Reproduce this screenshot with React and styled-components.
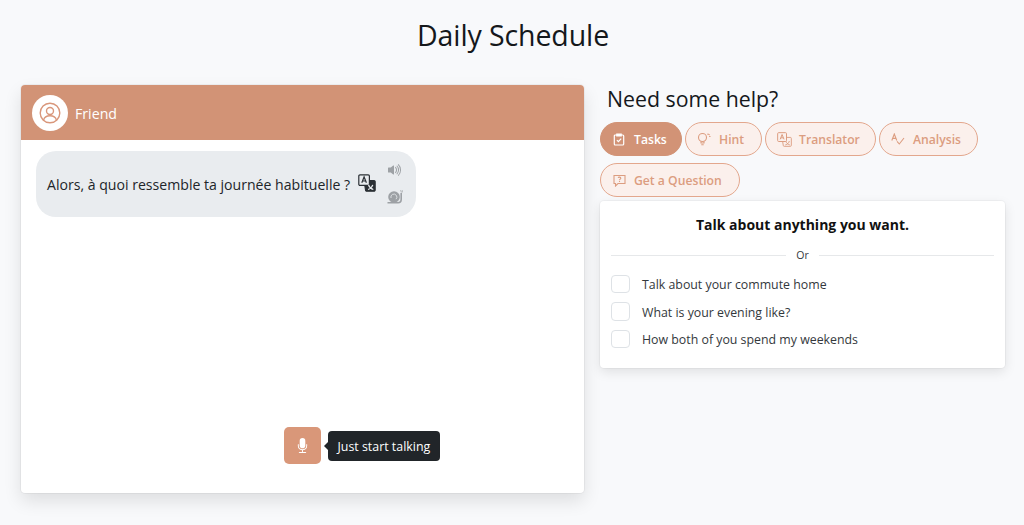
import React from "react";
import styled, { createGlobalStyle } from "styled-components";
import { BsVolumeUpFill, BsMicFill } from "react-icons/bs";

const Global = createGlobalStyle`
  html, body { margin: 0; padding: 0; background: #f8f9fb; }
  body { font-family: "Open Sans", "Noto Sans", sans-serif; color: #212529; }
  * { box-sizing: border-box; }
`;

const Page = styled.div`
  width: 1024px;
  height: 525px;
  overflow: hidden;
  padding: 0 19px 0 21px;
`;
const Title = styled.h1`
  margin: 0;
  height: 85px;
  padding-top: 15px;
  text-align: center;
  font-size: 28.5px;
  line-height: 40px;
  font-weight: 400;
  color: #15181b;
  letter-spacing: -0.1px;
`;
const Columns = styled.div`
  display: grid;
  grid-template-columns: 563px 405px;
  gap: 16px;
  align-items: start;
`;
const ChatCard = styled.section`
  height: 408px;
  background: #fff;
  border-radius: 4px;
  box-shadow: 0 0 0 1px rgba(0, 0, 0, 0.04), 0 8px 18px rgba(0, 0, 0, 0.11);
  overflow: hidden;
  display: flex;
  flex-direction: column;
`;
const ChatHeader = styled.header`
  height: 55px;
  background: #d29376;
  display: flex;
  align-items: center;
  gap: 7px;
  padding: 0 11px;
  color: #fff;
  font-size: 14.2px;
`;
const HeaderName = styled.span`
  padding-top: 1px;
`;
const Avatar = styled.div`
  width: 36px;
  height: 36px;
  border-radius: 50%;
  background: #fff;
  display: grid;
  place-items: center;
`;
const ChatBody = styled.div`
  flex: 1;
  padding: 11px 15px 29px;
  display: flex;
  flex-direction: column;
  justify-content: space-between;
`;
const Bubble = styled.div`
  width: 380px;
  height: 66px;
  border-radius: 20px;
  background: #e9ecef;
  display: flex;
  align-items: center;
  padding: 0 11px;
  font-size: 14.1px;
  color: #212529;
`;
const BubbleText = styled.span`
  white-space: nowrap;
`;
const TranslateSlot = styled.span`
  display: inline-flex;
  margin-left: 8px;
  margin-top: -3px;
`;
const SideIcons = styled.div`
  margin-left: auto;
  margin-right: 2px;
  margin-top: -2px;
  display: flex;
  flex-direction: column;
  align-items: center;
  gap: 11px;
  color: #9da1a5;
`;
const MicRow = styled.div`
  display: flex;
  align-items: center;
  margin-left: 248px;
`;
const MicButton = styled.button`
  width: 37px;
  height: 37px;
  border: 0;
  border-radius: 5px;
  background: #d99779;
  color: #fff;
  display: grid;
  place-items: center;
  padding: 0;
`;
const Tip = styled.div`
  position: relative;
  margin-left: 7px;
  height: 30px;
  padding: 0 9.500px;
  border-radius: 4px;
  background: #212529;
  color: #fff;
  font-size: 12.4px;
  line-height: 31px;
  white-space: nowrap;
  &::before {
    content: "";
    position: absolute;
    left: -4px;
    top: 11px;
    border-style: solid;
    border-width: 4px 4px 4px 0;
    border-color: transparent #212529 transparent transparent;
  }
`;
const Side = styled.aside`
  margin-top: -1px;
`;
const Help = styled.h2`
  margin: 0 0 8px 7px;
  font-size: 21.3px;
  line-height: 30px;
  font-weight: 400;
  color: #15181b;
`;
const Tabs = styled.div`
  display: flex;
  flex-wrap: wrap;
  gap: 7px 3px;
  width: 400px;
`;
const Tab = styled.button`
  height: 34px;
  width: ${(p) => p.$w}px;
  border-radius: 17px;
  border: 1px solid ${(p) => (p.$active ? "#d29376" : "#e3a78d")};
  background: ${(p) => (p.$active ? "#d29376" : "#fbf0ec")};
  color: ${(p) => (p.$active ? "#fff" : "#dc9d80")};
  font-family: inherit;
  font-size: 12.2px;
  font-weight: 600;
  display: inline-flex;
  align-items: center;
  gap: 8px;
  padding: 0 0 0 11px;
  white-space: nowrap;
`;
const TabIcon = styled.span`
  width: 14px;
  height: 14px;
  display: grid;
  place-items: center;
`;
const TaskCard = styled.div`
  margin-top: 4px;
  height: 167px;
  background: #fff;
  border-radius: 4px;
  box-shadow: 0 0 0 1px rgba(0, 0, 0, 0.03), 0 4px 12px rgba(0, 0, 0, 0.1);
  padding: 13px 11px;
`;
const TaskTitle = styled.div`
  text-align: center;
  font-size: 14px;
  line-height: 22px;
  font-weight: 700;
  color: #111;
`;
const Divider = styled.div`
  display: flex;
  align-items: center;
  gap: 10px;
  margin: 11px 0 11px;
  font-size: 10.5px;
  line-height: 16px;
  color: #33383c;
  &::before, &::after {
    content: "";
    flex: 1;
    height: 1px;
    background: #e6e8ea;
  }
`;
const Options = styled.div`
  display: flex;
  flex-direction: column;
  gap: 7.500px;
`;
const Option = styled.label`
  display: flex;
  align-items: center;
  gap: 12px;
  font-size: 12.35px;
  line-height: 18px;
  color: #33383c;
`;
const OptionText = styled.span`
  padding-top: 2px;
`;
const Box = styled.span`
  width: 19px;
  height: 18.500px;
  border: 1px solid #dee2e6;
  border-radius: 4px;
  background: #fff;
`;

const TranslateIcon = ({ size = 18, a = "#2b3035", b = "#2b3035", fade = false }) => (
  <svg width={size} height={size} viewBox="0 0 18 18" fill="none">
    <path d="M6 6.500H16a1.200 1.200 0 0 1 1.200 1.200V16a1.200 1.200 0 0 1-1.200 1.200H8.700a1.200 1.200 0 0 1-1.200-1.200z" fill={fade ? "none" : b} stroke={b} strokeWidth="1.100" />
    <rect x="0.800" y="0.800" width="10.600" height="10.600" rx="1.200" fill={fade ? "#fbf0ec" : "#e9ecef"} stroke={a} strokeWidth="1.200" />
    <path d="M3.800 8.800 6.100 3 8.400 8.800M4.800 7h2.600" stroke={a} strokeWidth="1.200" />
    <path d="M10 15.500c2.500-.6 4-2.200 4.800-4.600M10.500 11c.8 2.100 2.400 3.800 4.800 4.500" stroke={fade ? b : "#e9ecef"} strokeWidth="1.200" />
  </svg>
);

const UserIcon = () => (
  <svg width="22" height="22" viewBox="0 0 22 22" fill="none" stroke="#d9977b" strokeWidth="1.400">
    <circle cx="11" cy="11" r="9.800" />
    <circle cx="11" cy="9" r="3.500" />
    <path d="M4.600 18c.7-3 3-4.300 6.400-4.300s5.700 1.300 6.400 4.300" />
  </svg>
);
const SnailIcon = () => (
  <svg width="16" height="15" viewBox="0 0 16 15" fill="none">
    <path d="M.5 13.800h10.500c2 0 3.200-1.600 3.200-3.500V4" stroke="currentColor" strokeWidth="1.600" />
    <circle cx="7" cy="8" r="5.800" fill="currentColor" />
    <path d="M4 9a3 3 0 1 1 5 1.200" stroke="#e9ecef" strokeWidth=".8" />
    <path d="M14.300 3.500 13.700 1M15.200 3.500l.3-2.200" stroke="currentColor" strokeWidth=".7" />
  </svg>
);
const ClipIcon = () => (
  <svg width="12" height="13" viewBox="0 0 12 13" fill="none" stroke="currentColor" strokeWidth="1.200">
    <rect x="1.300" y="2" width="9.400" height="10" rx="1" />
    <path d="M3.800 1h4.400v2H3.800z" fill="currentColor" />
    <path d="M3.900 7.200 5.400 8.700 8.200 5.600" />
  </svg>
);
const BulbIcon = () => (
  <svg width="15" height="14" viewBox="0 0 15 14" fill="none" stroke="currentColor" strokeWidth="1.100">
    <circle cx="5.500" cy="5.500" r="4" />
    <path d="M4 9.500v1.500h3V9.500M4.300 12.800h2.400" />
    <path d="M11 1.500v1.600M13.500 4.500h-1.400M12.600 2.300l-.8.700" />
  </svg>
);
const AnalysisIcon = () => (
  <svg width="14" height="13" viewBox="0 0 14 13" fill="none" stroke="currentColor" strokeWidth="1.100">
    <path d="M.8 7.500 3.300 1 5.800 7.500M1.700 5.400h3.200" />
    <path d="M6 8.300 8.300 11 13 5" />
  </svg>
);
const QuestionIcon = () => (
  <svg width="13" height="13" viewBox="0 0 13 13" fill="none" stroke="currentColor" strokeWidth="1.100">
    <path d="M1 1.500h11v8H5L2.500 12V9.500H1z" />
    <path d="M5.200 3.800c.2-1 2.600-1 2.600.4 0 .9-1.300 1-1.300 2M6.500 7v1" />
  </svg>
);

export default function App() {
  return (
    <>
      <Global />
      <Page>
        <Title>Daily Schedule</Title>
        <Columns>
          <ChatCard>
            <ChatHeader>
              <Avatar><UserIcon /></Avatar>
              <HeaderName>Friend</HeaderName>
            </ChatHeader>
            <ChatBody>
              <Bubble>
                <BubbleText>Alors, à quoi ressemble ta journée habituelle ?</BubbleText>
                <TranslateSlot><TranslateIcon /></TranslateSlot>
                <SideIcons>
                  <BsVolumeUpFill size={16} />
                  <SnailIcon />
                </SideIcons>
              </Bubble>
              <MicRow>
                <MicButton aria-label="Microphone"><BsMicFill size={15} /></MicButton>
                <Tip>Just start talking</Tip>
              </MicRow>
            </ChatBody>
          </ChatCard>
          <Side>
            <Help>Need some help?</Help>
            <Tabs>
              <Tab $active $w={82}><TabIcon><ClipIcon /></TabIcon>Tasks</Tab>
              <Tab $w={77}><TabIcon><BulbIcon /></TabIcon>Hint</Tab>
              <Tab $w={111}><TabIcon><TranslateIcon size={15} a="#dc9d80" b="#dc9d80" fade /></TabIcon>Translator</Tab>
              <Tab $w={99}><TabIcon><AnalysisIcon /></TabIcon>Analysis</Tab>
              <Tab $w={140}><TabIcon><QuestionIcon /></TabIcon>Get a Question</Tab>
            </Tabs>
            <TaskCard>
              <TaskTitle>Talk about anything you want.</TaskTitle>
              <Divider>Or</Divider>
              <Options>
                <Option><Box /><OptionText>Talk about your commute home</OptionText></Option>
                <Option><Box /><OptionText>What is your evening like?</OptionText></Option>
                <Option><Box /><OptionText>How both of you spend my weekends</OptionText></Option>
              </Options>
            </TaskCard>
          </Side>
        </Columns>
      </Page>
    </>
  );
}
